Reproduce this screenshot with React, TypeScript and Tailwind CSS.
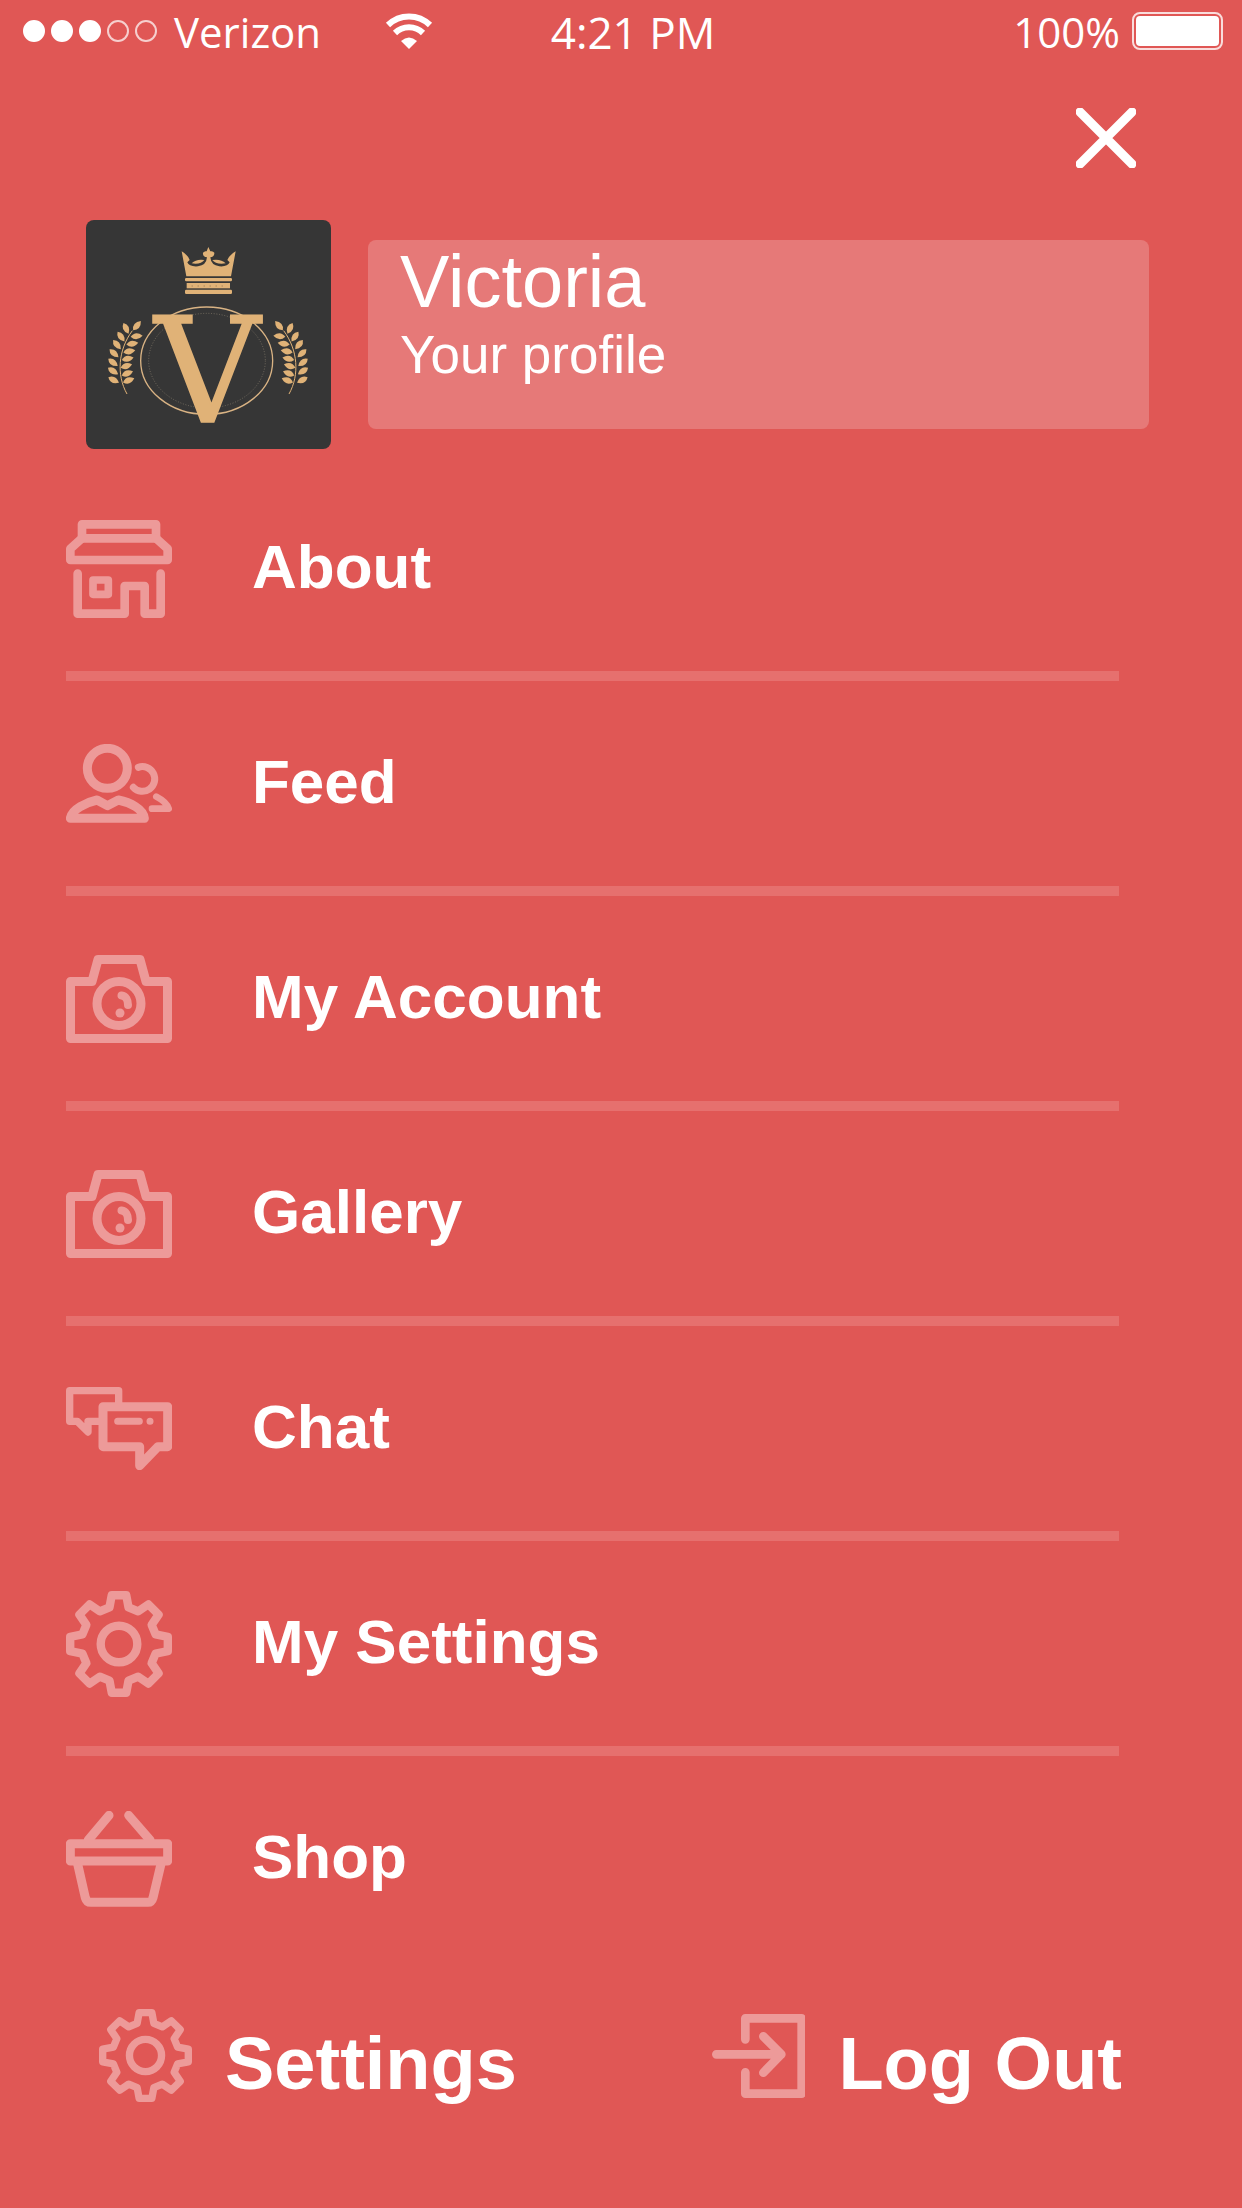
import React from "react";

const GEAR_PATH = (() => {
  const tooth = [
    [-25, -96],
    [-19, -128],
    [19, -128],
    [25, -96],
  ];
  const points: string[] = [];
  for (let i = 0; i < 8; i++) {
    const a = (i * Math.PI) / 4;
    for (const [x, y] of tooth) {
      const px = x * Math.cos(a) - y * Math.sin(a);
      const py = x * Math.sin(a) + y * Math.cos(a);
      points.push(`${px.toFixed(1)} ${py.toFixed(1)}`);
    }
  }
  return `M${points.join("L")}Z`;
})();

type IconProps = { className?: string };

function Icon({
  viewBox,
  className = "w-[106px]",
  strokeWidth,
  children,
}: {
  viewBox: string;
  className?: string;
  strokeWidth: number;
  children: React.ReactNode;
}) {
  return (
    <svg
      viewBox={viewBox}
      className={`${className} shrink-0 text-[#ed9a99]`}
      fill="none"
      stroke="currentColor"
      strokeWidth={strokeWidth}
      strokeLinecap="round"
      strokeLinejoin="round"
      aria-hidden="true"
    >
      {children}
    </svg>
  );
}

function StoreIcon() {
  return (
    <Icon viewBox="78 57 318 294" strokeWidth={26}>
      <path d="M126 112V70H348V112Z" />
      <path d="M126 112L91 143V177H383V143L348 112" />
      <path d="M113 218V338H254V255H314V338H362V218" />
      <rect x="159" y="237" width="46" height="43" strokeWidth="23" />
    </Icon>
  );
}

function PeopleIcon() {
  return (
    <Icon viewBox="78 72 318 237" strokeWidth={27}>
      <circle cx="202" cy="145" r="60" />
      <path d="M295 142A37 37 0 1 1 280 202" strokeWidth="21" />
      <path d="M91 295C95 267 140 247 171 240L202 257L235 240C270 247 310 267 313 295Z" />
      <path d="M349 230C368 240 383 255 386 266H336" strokeWidth="20" />
    </Icon>
  );
}

function CameraIcon() {
  return (
    <Icon viewBox="0 0 106 88" strokeWidth={9}>
      <path d="M4.5 26.5H26L32 4.5H74L80 26.5H101.5V83.5H4.5Z" />
      <circle cx="53" cy="48.5" r="22" />
      <path d="M55.500 40.500C60 41 62 45 62 50" strokeWidth="8" />
      <circle cx="54" cy="58" r="4.500" fill="currentColor" stroke="none" />
    </Icon>
  );
}

function ChatIcon() {
  return (
    <Icon viewBox="78 51 318 249" strokeWidth={27}>
      <path d="M236 100V62H89V154H112L144 186V154H176" strokeWidth="22" />
      <path d="M189 110H383V230H354L299 287V230H189Z" />
      <path d="M233 154H298M330 154H330.1" strokeWidth="21" />
    </Icon>
  );
}

function GearIcon({ className }: IconProps) {
  return (
    <Icon viewBox="-139 -139 278 278" strokeWidth={22} className={className}>
      <path d={GEAR_PATH} />
      <circle r="48" />
    </Icon>
  );
}

function BasketIcon() {
  return (
    <Icon viewBox="78 63 318 288" strokeWidth={27}>
      <path d="M207 76L145 150M266 76L330 150" />
      <rect x="91" y="161" width="292" height="52" />
      <path d="M113 222L136 323Q140 337 152 337H324Q335 337 339 323L363 222" />
    </Icon>
  );
}

function LogOutIcon() {
  return (
    <Icon viewBox="96 99 279 252" strokeWidth={26} className="w-[93px]">
      <path d="M196 175V112H365V338H196V274" />
      <path d="M109 220H304M250 166L304 220L250 275" />
    </Icon>
  );
}

function WifiIcon() {
  return (
    <svg viewBox="0 0 48 36" className="h-9 w-12" fill="none" stroke="white" strokeWidth="6" aria-hidden="true">
      <path d="M3 12A30 30 0 0 1 45 12" />
      <path d="M10 20A20 20 0 0 1 38 20" />
      <path d="M16 28Q24 21 32 28L24 36Z" fill="white" stroke="none" />
    </svg>
  );
}

const LEAVES: [number, number, number][] = [
  [132, 540, 28],
  [130, 513, 32],
  [130, 487, 38],
  [133, 460, 42],
  [142, 434, 50],
  [154, 410, 55],
  [169, 385, 65],
  [202, 377, -50],
  [201, 409, -5],
  [188, 431, -8],
  [179, 454, -10],
  [174, 476, -12],
  [170, 498, -18],
  [173, 520, -20],
  [177, 541, -20],
];

function Laurel() {
  return (
    <>
      <path d="M172 582C140 525 145 450 188 392" fill="none" stroke="#e0b277" strokeWidth="3" />
      {LEAVES.map(([x, y, a]) => (
        <path
          key={`${x}-${y}`}
          d="M-18 0Q-2 -18 18 0Q-2 18 -18 0Z"
          transform={`translate(${x} ${y}) rotate(${a})`}
        />
      ))}
    </>
  );
}

function Crest() {
  return (
    <svg
      viewBox="49 60 735 687"
      className="w-[245px] shrink-0 overflow-visible rounded-lg bg-[#363636]"
      fill="#e0b277"
      role="img"
      aria-label="Victoria crest"
    >
      <path d="M336 154Q354 164 360 180L353 187Q358 201 385 199Q410 196 412 172Q398 170 400 158Q405 152 411 154L416 141L422 154Q430 152 434 158Q435 170 422 172Q424 196 449 199Q474 201 480 187L473 180Q480 164 498 154L484 229H350Z" />
      <path d="M366 190Q380 176 404 180Q394 194 366 190Z" />
      <path d="M468 190Q454 176 428 180Q438 194 468 190Z" />
      <rect x="346" y="234" width="141" height="10" rx="4" />
      <rect x="351" y="249" width="130" height="16" />
      <path d="M366 258H470" stroke="#8d7350" strokeWidth="3" strokeDasharray="3 15" />
      <rect x="346" y="269" width="141" height="13" rx="4" />
      <ellipse cx="411" cy="482" rx="198" ry="161" fill="none" stroke="#d9b384" strokeWidth="4" />
      <ellipse cx="412" cy="482" rx="175" ry="142" fill="none" stroke="#8d8270" strokeWidth="2" strokeDasharray="3 5" />
      <text
        x="413"
        y="666"
        textAnchor="middle"
        fontSize="438"
        stroke="#e0b277"
        strokeWidth="5"
        className="font-['DejaVu_Serif',serif]"
      >
        V
      </text>
      <Laurel />
      <g transform="translate(830 0) scale(-1 1)">
        <Laurel />
      </g>
    </svg>
  );
}

const MENU = [
  { label: "About", icon: <StoreIcon /> },
  { label: "Feed", icon: <PeopleIcon /> },
  { label: "My Account", icon: <CameraIcon /> },
  { label: "Gallery", icon: <CameraIcon /> },
  { label: "Chat", icon: <ChatIcon /> },
  { label: "My Settings", icon: <GearIcon /> },
  { label: "Shop", icon: <BasketIcon /> },
];

function StatusBar() {
  return (
    <header className="grid h-[62px] grid-cols-[1fr_auto_1fr] items-center pr-[19px] pl-[23px] font-['Open_Sans',sans-serif] text-[42px] leading-none font-medium">
      <div className="flex items-center">
        <div className="flex gap-1.5" role="img" aria-label="Signal: 3 of 5">
          {[true, true, true, false, false].map((on, i) => (
            <span
              key={i}
              className={`size-[22px] rounded-full border-2 ${on ? "border-white bg-white" : "border-[#f6cfce]"}`}
            />
          ))}
        </div>
        <span className="mr-16 ml-[17px] pt-0.5">Verizon</span>
        <WifiIcon />
      </div>
      <time className="ml-5 pt-0.5 text-[44px]">4:21 PM</time>
      <div className="flex items-center justify-end gap-3">
        <span className="pt-0.5">100%</span>
        <span className="flex h-[38px] w-[91px] rounded-lg border-2 border-[#f9dddc] p-0.5" role="img" aria-label="Battery full">
          <span className="flex-1 rounded-sm bg-white" />
        </span>
      </div>
    </header>
  );
}

export default function App() {
  return (
    <div className="min-h-screen bg-[#e05755] pb-4 font-['Liberation_Sans',Arial,sans-serif] text-white">
      <StatusBar />

      <div className="flex justify-end pt-[46px] pr-[106px]">
        <button type="button" aria-label="Close menu" className="size-[60px]">
          <svg viewBox="0 0 60 60" className="size-full" stroke="white" strokeWidth="9" strokeLinecap="round">
            <path d="M4 4L56 56M56 4L4 56" />
          </svg>
        </button>
      </div>

      <a href="#profile" className="mt-[52px] mr-[93px] ml-[86px] flex items-center gap-[37px]">
        <Crest />
        <span className="flex h-[189px] flex-1 flex-col rounded-lg bg-[#e67978] pt-0.5 pl-8">
          <span className="text-[74px] leading-[80px]">Victoria</span>
          <span className="text-[53px] leading-[66px]">Your profile</span>
        </span>
      </a>

      <nav className="mt-[17px] mr-[123px] ml-[66px]" aria-label="Main">
        <ul className="divide-y-[10px] divide-[#e6706e]">
          {MENU.map(({ label, icon }) => (
            <li key={label}>
              <a href="#menu" className="flex h-[205px] items-center gap-20">
                {icon}
                <span className="pb-1 text-[62px] leading-none font-bold">{label}</span>
              </a>
            </li>
          ))}
        </ul>
      </nav>

      <footer className="mt-12 mr-[120px] ml-[99px] flex justify-between text-[74px] leading-[76px] font-bold">
        <a href="#settings" className="flex items-center gap-[33px]">
          <GearIcon className="w-[93px]" />
          <span className="pt-4">Settings</span>
        </a>
        <button type="button" className="flex items-center gap-[33px]">
          <LogOutIcon />
          <span className="pt-4">Log Out</span>
        </button>
      </footer>
    </div>
  );
}
